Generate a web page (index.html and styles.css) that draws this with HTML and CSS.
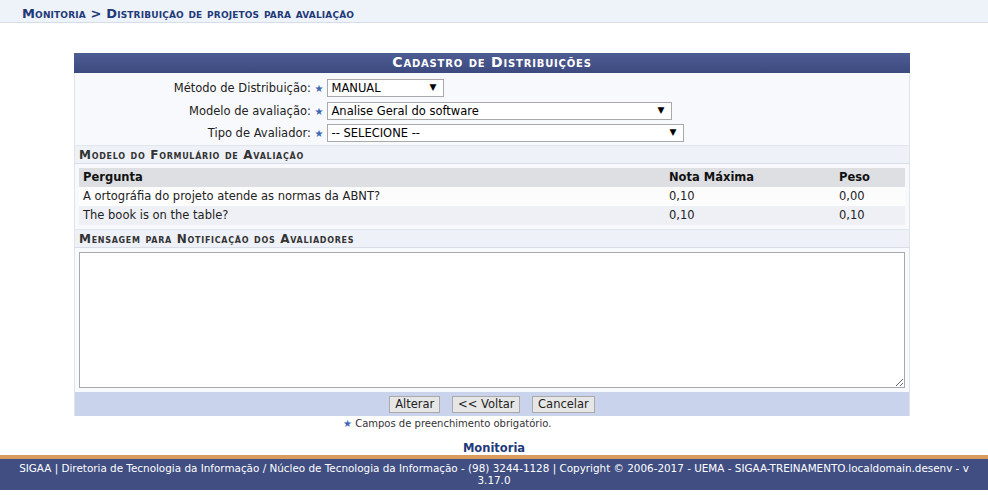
FILE: index.html
```html
<!DOCTYPE html>
<html lang="pt-BR">
  <head>
    <meta charset="UTF-8" />
    <title>Distribuição de projetos para avaliação</title>
    <link rel="stylesheet" href="styles.css">
  </head>
  <body>
    <div class="crumb">Monitoria &gt; Distribuição de projetos para avaliação</div>

    <div class="conteudo">
      <table class="formulario">
        <caption>Cadastro de Distribuições</caption>
        <tbody>
          <tr class="campo primeiro">
            <th>Método de Distribuição: <span class="req">&#9733;</span></th>
            <td><div class="sel w1">MANUAL<span class="seta">&#9660;</span></div></td>
          </tr>
          <tr class="campo">
            <th>Modelo de avaliação: <span class="req">&#9733;</span></th>
            <td><div class="sel w2">Analise Geral do software<span class="seta">&#9660;</span></div></td>
          </tr>
          <tr class="campo">
            <th>Tipo de Avaliador: <span class="req">&#9733;</span></th>
            <td><div class="sel w3">-- SELECIONE --<span class="seta">&#9660;</span></div></td>
          </tr>
          <tr>
            <td colspan="2" class="subtitulo">Modelo do Formulário de Avaliação</td>
          </tr>
          <tr>
            <td colspan="2" class="celula">
              <table class="listagem">
                <thead>
                  <tr>
                    <th>Pergunta</th>
                    <th class="nota">Nota Máxima</th>
                    <th class="peso">Peso</th>
                  </tr>
                </thead>
                <tbody>
                  <tr class="par">
                    <td>A ortográfia do projeto atende as normas da ABNT?</td>
                    <td>0,10</td>
                    <td>0,00</td>
                  </tr>
                  <tr class="impar">
                    <td>The book is on the table?</td>
                    <td>0,10</td>
                    <td>0,10</td>
                  </tr>
                </tbody>
              </table>
            </td>
          </tr>
          <tr>
            <td colspan="2" class="subtitulo">Mensagem para Notificação dos Avaliadores</td>
          </tr>
          <tr>
            <td colspan="2" class="celula"><textarea></textarea></td>
          </tr>
        </tbody>
        <tfoot>
          <tr>
            <td colspan="2">
              <button>Alterar</button>
              <button>&lt;&lt; Voltar</button>
              <button>Cancelar</button>
            </td>
          </tr>
        </tfoot>
      </table>

      <p class="obrigatorio"><span class="req">&#9733;</span> Campos de preenchimento obrigatório.</p>
    </div>

    <div class="modulo">Monitoria</div>
    <div class="rodape">
      SIGAA | Diretoria de Tecnologia da Informação / Núcleo de Tecnologia da Informação - (98) 3244-1128 | Copyright © 2006-2017 - UEMA - SIGAA-TREINAMENTO.localdomain.desenv - v<br>3.17.0
    </div>
  </body>
</html>
```

FILE: styles.css
```css
* {
  margin: 0;
  padding: 0;
  box-sizing: border-box;
}

body {
  font-family: "DejaVu Sans", Verdana, sans-serif;
  font-size: 11.5px;
  color: #222;
  background: #fff;
}

.crumb {
  height: 23px;
  padding: 6px 0 0 22px;
  background: #eef2f9;
  border-bottom: 1px solid #d6dce8;
  color: #1f3a78;
  font-weight: bold;
  font-size: 13px;
  letter-spacing: 0.15px;
  font-variant: small-caps;
}

.conteudo {
  padding-top: 30px;
}

/* formulario */
.formulario {
  width: 836px;
  margin: 0 0 0 74px;
  border-collapse: collapse;
  background: #f8f9fc;
  border-left: 1px solid #dfe3ec;
  border-right: 1px solid #dfe3ec;
}

.formulario caption {
  height: 20px;
  padding-top: 1px;
  background: linear-gradient(#4d5c92, #3c4a7f);
  color: #fff;
  font-weight: bold;
  font-variant: small-caps;
  font-size: 14px;
  letter-spacing: 0.8px;
}

.formulario .campo th {
  width: 252px;
  text-align: right;
  font-weight: normal;
  padding-right: 3px;
  height: 23px;
  white-space: nowrap;
}

.formulario .campo td {
  height: 23px;
}

.formulario .primeiro th,
.formulario .primeiro td {
  height: 26px;
  padding-top: 3px;
}

.req {
  color: #3b67b4;
  font-size: 10px;
}

.sel {
  position: relative;
  height: 18px;
  border: 1px solid #a9a9a9;
  background: #fff;
  padding: 1px 0 0 4px;
  color: #000;
}

.sel .seta {
  position: absolute;
  right: 6px;
  top: 2px;
  font-size: 9px;
}

.w1 { width: 117px; }
.w2 { width: 345px; }
.w3 { width: 357px; }

.subtitulo {
  height: 18px;
  padding: 2px 0 0 4px;
  background: #eef1f7;
  border-top: 1px solid #e2e6ee;
  border-bottom: 1px solid #d8dde8;
  color: #333;
  font-weight: bold;
  font-size: 12px;
  font-variant: small-caps;
  letter-spacing: 0.7px;
}

.celula {
  padding: 4px;
}

/* tabela de perguntas */
.listagem {
  width: 100%;
  border-collapse: collapse;
}

.listagem th {
  height: 19px;
  background: #dedfe3;
  text-align: left;
  padding-left: 4px;
  color: #111;
}

.listagem td {
  height: 19px;
  padding-left: 4px;
}

.listagem .nota {
  width: 170px;
}

.listagem .peso {
  width: 70px;
}

.listagem .par td {
  background: #fcfcfd;
}

.listagem .impar td {
  background: #eef0f6;
}

textarea {
  display: block;
  width: 826px;
  height: 136px;
  border: 1px solid #a9a9a9;
  background: #fff;
  resize: both;
}

.formulario tfoot td {
  height: 24px;
  background: #c9d3ec;
  text-align: center;
  padding-top: 1px;
}

button {
  height: 17px;
  padding: 0 5px;
  margin: 0 4px;
  border: 1px solid #a9a9a9;
  background: #e6e6e6;
  font-family: "DejaVu Sans", Verdana, sans-serif;
  font-size: 11.5px;
  line-height: 15px;
  color: #222;
}

.obrigatorio {
  margin: 2px 0 0 343px;
  font-size: 10px;
  color: #333;
}

.modulo {
  margin-top: 12px;
  text-align: center;
  color: #1f3a78;
  font-weight: bold;
  height: 14px;
}

.rodape {
  height: 35px;
  border-top: 4px solid #d89c5e;
  background: #404e82;
  color: #fff;
  font-size: 10.4px;
  text-align: center;
  padding: 3px 4px 0;
  line-height: 12px;
  white-space: nowrap;
}
```
